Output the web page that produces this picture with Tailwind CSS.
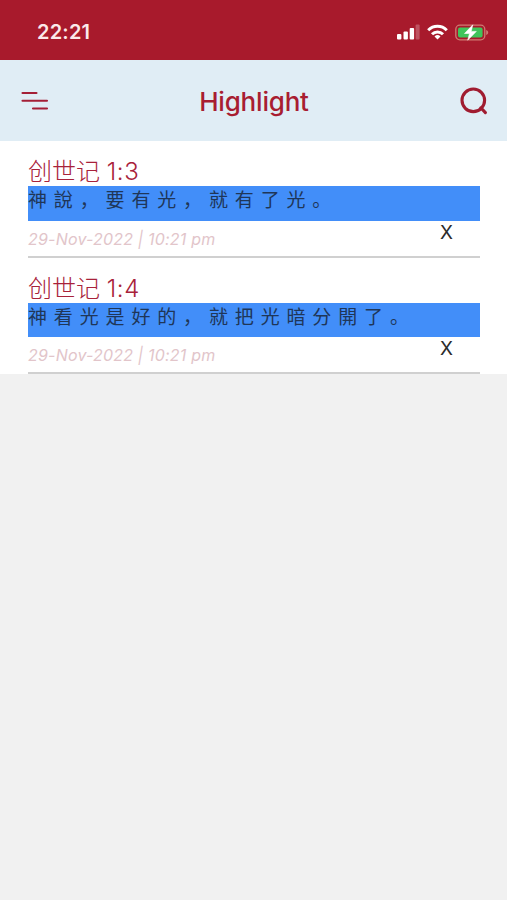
<!DOCTYPE html>
<html lang="zh-Hans">

<head>
    <meta charset="utf-8">
    <meta name="viewport" content="width=device-width, initial-scale=1">
    <title>Highlight</title>
    <script src="https://cdn.jsdelivr.net/npm/@tailwindcss/browser@4"></script>
</head>

<body class="min-h-screen overflow-hidden bg-[#f1f1f1] font-['Inter','Noto_Sans_CJK_SC',sans-serif]">
    <!-- Status bar -->
    <div class="flex h-[60px] items-center justify-between bg-[#a81a2c] pt-[4px] pr-[18px] pl-[37px]">
        <span class="text-[20px] font-semibold tracking-[0.2px] text-[#fbe9ea]">22:21</span>
        <div class="flex items-center gap-[7px]">
            <svg class="h-[16px] w-[24px]" viewBox="0 0 24 16" fill="#fff">
                <rect x="1" y="10" width="4.4" height="5.5" rx="1" />
                <rect x="7.5" y="7.5" width="4.4" height="8" rx="1" />
                <rect x="13.7" y="4" width="4.4" height="11.5" rx="1" />
                <rect x="19.6" y="0.5" width="4" height="15" rx="1" fill-opacity=".25" />
            </svg>
            <svg class="h-[16px] w-[21px]" viewBox="0 0 21 16" fill="none" stroke="#fff" stroke-width="3">
                <path d="M1.2 6.2a13.2 13.2 0 0 1 18.6 0" />
                <path d="M5 10.2a7.8 7.8 0 0 1 11 0" />
                <path d="M10.5 15.6l-3-3.1a4.3 4.3 0 0 1 6 0z" fill="#fff" stroke="none" />
            </svg>
            <svg class="h-[17px] w-[34px]" viewBox="0 0 34 17">
                <rect x="0.8" y="1.2" width="29" height="14.6" rx="4" fill="none" stroke="#cf7a72" stroke-width="1.3" />
                <rect x="3" y="3.4" width="24.6" height="10.2" rx="2" fill="#3fc45a" />
                <path d="M31.2 6v5c1.3-.4 2-1.3 2-2.5s-.7-2.1-2-2.5z" fill="#cf7a72" />
                <path d="M17.8 .8L9.5 9.5h5l-1.8 6.7 8.6-8.8h-5.1z" fill="#fff" stroke="#fff" stroke-width=".6" />
            </svg>
        </div>
    </div>

    <!-- Header -->
    <header class="flex h-[81px] items-center justify-between bg-[#e0edf5] pr-[19px] pl-[21px]">
        <svg class="h-[20px] w-[28px]" viewBox="0 0 28 20" fill="none" stroke="#a41f36" stroke-width="2.1" stroke-linecap="round">
            <path d="M1.5 2h14M1.5 9.7h24.5M12 17.5h14" />
        </svg>
        <h1 class="-ml-px pt-[2px] text-[26px] leading-none font-medium tracking-[-0.2px] text-[#a81d31]">Highlight</h1>
        <svg class="h-[28px] w-[28px]" viewBox="0 0 28 28" fill="none" stroke="#a01c30" stroke-width="3.1" stroke-linecap="round">
            <circle cx="13.3" cy="13.3" r="11.3" />
            <path d="M20.8 20.8l4.6 4.8" />
        </svg>
    </header>

    <!-- Highlighted verses -->
    <main class="bg-white">
        <article class="h-[116.5px] pt-[17px] pr-[27px] pl-[28px]">
            <div class="flex h-full flex-col border-b-2 border-[#d0d0d0]">
                <h2 class="h-[28px] text-[24px] leading-[28px] font-light text-[#a8223a]"><span>创世记</span> <span class="tracking-[0.6px]">1:3</span></h2>
                <p class="h-[34.5px] bg-[#428ef9] pt-[2px] text-[19px] leading-[26px] tracking-[6.85px] whitespace-nowrap text-[#1f3658]">神說，要有光，就有了光。</p>
                <div class="flex justify-between pt-px pr-[27px]">
                    <span class="pt-[5px] text-[16px] leading-6 tracking-[0.2px] text-[#e2c5ca] italic">29-Nov-2022 | 10:21 pm</span>
                    <button class="h-[21px] text-[19px] leading-[21px] text-[#2b2b2b]">X</button>
                </div>
            </div>
        </article>
        <article class="h-[116.5px] pt-[17px] pr-[27px] pl-[28px]">
            <div class="flex h-full flex-col border-b-2 border-[#d0d0d0]">
                <h2 class="h-[28px] text-[24px] leading-[28px] font-light text-[#a8223a]"><span>创世记</span> <span class="tracking-[0.6px]">1:4</span></h2>
                <p class="h-[34.5px] bg-[#428ef9] pt-[2px] text-[19px] leading-[26px] tracking-[6.85px] whitespace-nowrap text-[#1f3658]">神看光是好的，就把光暗分開了。</p>
                <div class="flex justify-between pt-px pr-[27px]">
                    <span class="pt-[5px] text-[16px] leading-6 tracking-[0.2px] text-[#e2c5ca] italic">29-Nov-2022 | 10:21 pm</span>
                    <button class="h-[21px] text-[19px] leading-[21px] text-[#2b2b2b]">X</button>
                </div>
            </div>
        </article>
    </main>
</body>

</html>
